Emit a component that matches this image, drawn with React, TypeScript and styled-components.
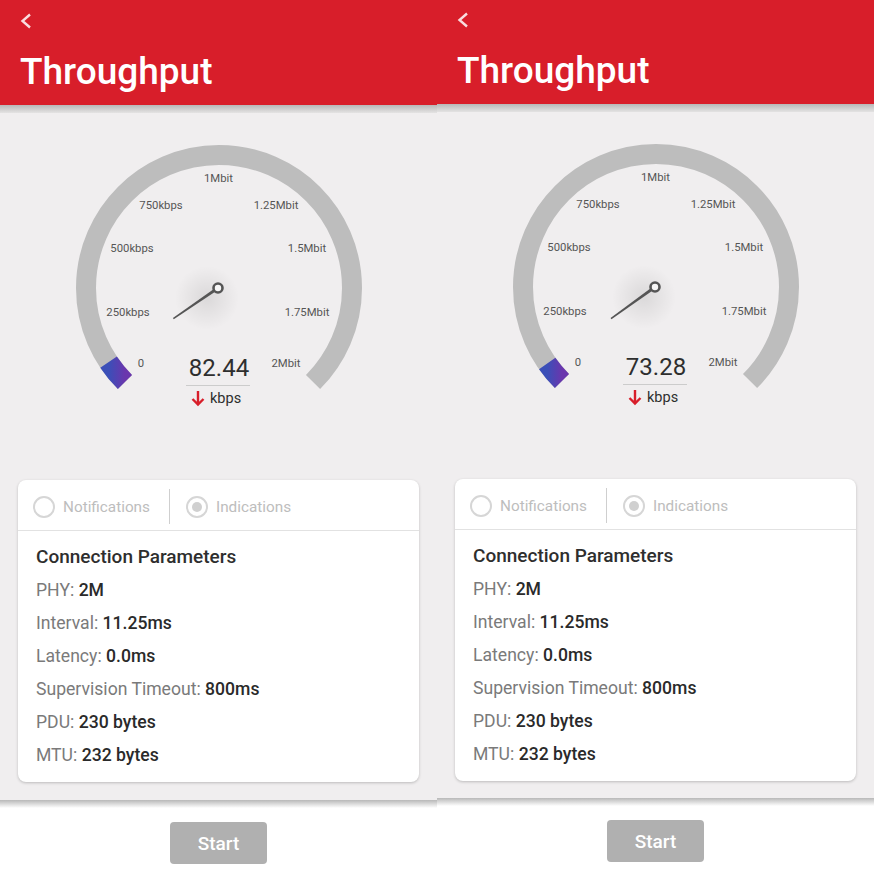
import React from 'react';
import styled, { createGlobalStyle } from 'styled-components';

const GlobalStyle = createGlobalStyle`
  html, body {
    margin: 0;
    padding: 0;
    background: #fff;
  }
  body {
    font-family: Roboto, "Noto Sans", "Liberation Sans", sans-serif;
  }
`;

const Page = styled.div`
  display: flex;
  width: 874px;
  height: 875px;
  overflow: hidden;
`;

const Screen = styled.div`
  width: 437px;
  display: flex;
  flex-direction: column;
  background: #fff;
`;

const Header = styled.header<{ $h: number }>`
  height: ${(p) => p.$h}px;
  background: #d81e2a;
  padding: ${(p) => (p.$h === 105 ? 13 : 12)}px 20px 0;
  box-sizing: border-box;
  color: #fff;
`;

const BackIcon = styled.svg`
  display: block;
  width: 12px;
  height: 16px;
`;

const Title = styled.h1`
  margin: 21px 0 0;
  font-size: 37px;
  line-height: 44px;
  font-weight: 500;
  letter-spacing: 0;
`;

const ShadowStrip = styled.div<{ $to: string }>`
  height: 8px;
  background: linear-gradient(to bottom, #b8b8b8, ${(p) => p.$to});
`;

const Body = styled.main<{ $h: number }>`
  height: ${(p) => p.$h}px;
  background: #f0eeef;
  display: flex;
  flex-direction: column;
  align-items: center;
  padding-top: 25px;
  box-sizing: border-box;
`;

const GaugeSvg = styled.svg`
  display: block;
  width: 300px;
  height: 300px;
  margin-bottom: 42px;
`;

const Card = styled.section`
  width: 401px;
  background: #fff;
  border-radius: 8px;
  box-shadow: 0 1px 3px rgba(0, 0, 0, 0.22);
`;

const ModeRow = styled.div`
  height: 51px;
  box-sizing: border-box;
  padding: 3px 0 0 15px;
  display: flex;
  align-items: center;
  border-bottom: 1px solid #e2e2e2;
`;

const Radio = styled.label`
  display: flex;
  align-items: center;
  gap: 8px;
  font-size: 15.3px;
  color: #bdbdbd;
`;

const RadioDot = styled.span<{ $on?: boolean }>`
  width: 22px;
  height: 22px;
  box-sizing: border-box;
  border: 2px solid #d6d6d6;
  border-radius: 50%;
  display: grid;
  place-items: center;
  &::after {
    content: '';
    width: 10px;
    height: 10px;
    border-radius: 50%;
    background: ${(p) => (p.$on ? '#d0d0d0' : 'transparent')};
  }
`;

const Divider = styled.span`
  width: 1px;
  height: 35px;
  background: #cfcfcf;
  margin: 0 16px 0 19px;
`;

const Params = styled.div`
  padding: 9px 18px 10px;
`;

const ParamsTitle = styled.h2`
  margin: 0 0 1px;
  font-size: 19px;
  line-height: 33px;
  font-weight: 500;
  color: #2e2e2e;
`;

const ParamRow = styled.div`
  font-size: 17.6px;
  line-height: 33px;
  color: #7a7a7a;
  b {
    font-weight: 500;
    color: #2a2a2a;
  }
`;

const Footer = styled.footer`
  flex: 1;
  display: flex;
  justify-content: center;
  padding-top: 14px;
  background: #fff;
`;

const StartButton = styled.button`
  width: 97px;
  height: 42px;
  border: none;
  border-radius: 4px;
  background: #b0b0b0;
  color: #fff;
  font-family: inherit;
  font-size: 19px;
  font-weight: 500;
`;

const LABELS: [string, number, number][] = [
  ['0', -78, 75],
  ['250kbps', -91, 24],
  ['500kbps', -87, -40],
  ['750kbps', -58, -83],
  ['1Mbit', -0.5, -110],
  ['1.25Mbit', 57, -83],
  ['1.5Mbit', 88, -40],
  ['1.75Mbit', 88, 24],
  ['2Mbit', 67, 75],
];

const CX = 150;
const CY = 150;
const R = 133;

const pt = (deg: number, r: number) => {
  const a = (deg * Math.PI) / 180;
  return [CX + r * Math.cos(a), CY - r * Math.sin(a)];
};

const arc = (from: number, to: number) => {
  const [x1, y1] = pt(from, R);
  const [x2, y2] = pt(to, R);
  const large = from - to > 180 ? 1 : 0;
  return `M${x1} ${y1} A${R} ${R} 0 ${large} 1 ${x2} ${y2}`;
};

const Gauge: React.FC<{ value: number }> = ({ value }) => {
  const angle = 225 - (value / 2000) * 270;
  const [tx, ty] = pt(angle, 55);
  const a = (angle * Math.PI) / 180;
  const nx = Math.sin(a);
  const ny = Math.cos(a);
  const px = CX - 1;
  const py = CY;
  const needle = `M${px + nx * 1.6} ${py + ny * 1.6} L${tx + nx * 0.8} ${ty + ny * 0.8} L${tx - nx * 0.8} ${ty - ny * 0.8} L${px - nx * 1.6} ${py - ny * 1.6} Z`;
  return (
    <GaugeSvg viewBox="0 0 300 300">
      <defs>
        <linearGradient id="active" x1="0" y1="0" x2="1" y2="0">
          <stop offset="0" stopColor="#3b4fb8" />
          <stop offset="1" stopColor="#6a36ad" />
        </linearGradient>
        <radialGradient id="glow">
          <stop offset="0" stopColor="#000" stopOpacity="0.09" />
          <stop offset="1" stopColor="#000" stopOpacity="0" />
        </radialGradient>
      </defs>
      <path d={arc(225, -45)} fill="none" stroke="#bdbdbd" strokeWidth="20" />
      <path d={arc(225, angle)} fill="none" stroke="url(#active)" strokeWidth="20" />
      {LABELS.map(([t, dx, dy]) => (
        <text
          key={t}
          x={CX + dx}
          y={CY + dy + 4}
          textAnchor="middle"
          fontSize="11.3"
          fill="#555"
          fontFamily="Roboto, sans-serif"
        >
          {t}
        </text>
      ))}
      <circle cx={CX - 12} cy={CY + 10} r="32" fill="url(#glow)" />
      <path d={needle} fill="#555" />
      <circle cx={px} cy={py} r="4.5" fill="#f7f7f7" stroke="#555" strokeWidth="2.6" />
      <text x={CX} y="238" textAnchor="middle" fontSize="24" fill="#2e2e2e" fontFamily="Roboto, sans-serif">
        {value.toFixed(2)}
      </text>
      <line x1="117" y1="247.5" x2="181" y2="247.5" stroke="#cccccc" strokeWidth="1" />
      <path d="M129 253 V266.5 M123.5 261 L129 266.5 L134.5 261" fill="none" stroke="#d81e2a" strokeWidth="2.4" />
      <text x="141" y="264.7" fontSize="14.5" fill="#2e2e2e" fontFamily="Roboto, sans-serif">
        kbps
      </text>
    </GaugeSvg>
  );
};

const PARAMS: [string, string][] = [
  ['PHY', '2M'],
  ['Interval', '11.25ms'],
  ['Latency', '0.0ms'],
  ['Supervision Timeout', '800ms'],
  ['PDU', '230 bytes'],
  ['MTU', '232 bytes'],
];

const ThroughputScreen: React.FC<{ value: number; shift: number }> = ({ value, shift }) => (
  <Screen>
    <Header $h={105 - shift}>
      <BackIcon viewBox="0 0 12 16">
        <path d="M10 1.5 L2.5 8 L10 14.5" fill="none" stroke="rgba(255,255,255,0.85)" strokeWidth="2.4" />
      </BackIcon>
      <Title>Throughput</Title>
    </Header>
    <ShadowStrip $to="#e4e3e3" />
    <Body $h={687 - shift}>
      <Gauge value={value} />
      <Card>
        <ModeRow>
          <Radio>
            <RadioDot />
            Notifications
          </Radio>
          <Divider />
          <Radio>
            <RadioDot $on />
            Indications
          </Radio>
        </ModeRow>
        <Params>
          <ParamsTitle>Connection Parameters</ParamsTitle>
          {PARAMS.map(([k, v]) => (
            <ParamRow key={k}>
              {k}: <b>{v}</b>
            </ParamRow>
          ))}
        </Params>
      </Card>
    </Body>
    <ShadowStrip $to="#ffffff" />
    <Footer>
      <StartButton>Start</StartButton>
    </Footer>
  </Screen>
);

export default function App() {
  return (
    <>
      <GlobalStyle />
      <Page>
        <ThroughputScreen value={82.44} shift={0} />
        <ThroughputScreen value={73.28} shift={1} />
      </Page>
    </>
  );
}
